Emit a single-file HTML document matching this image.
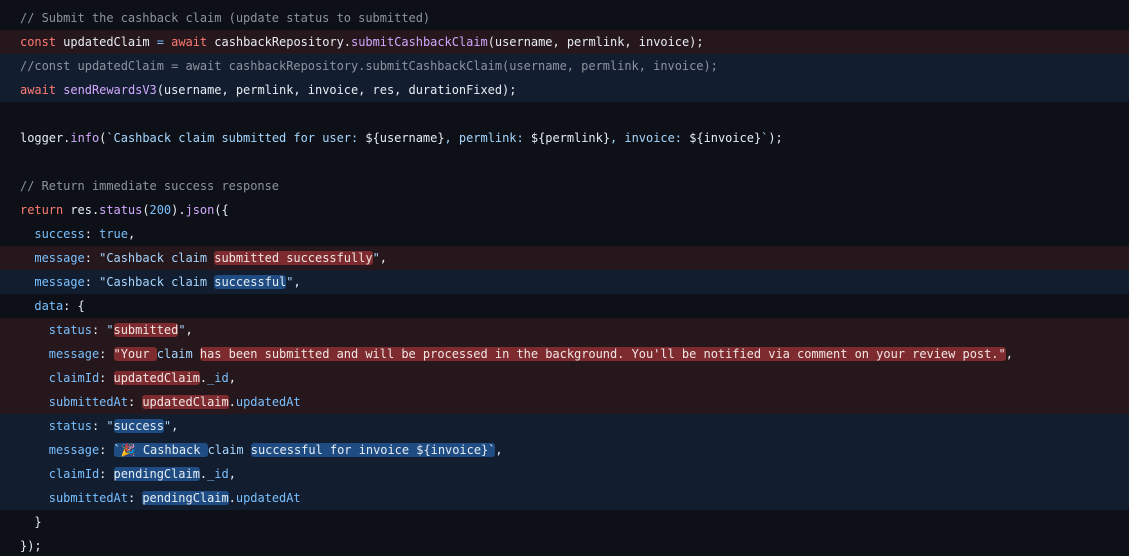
<!DOCTYPE html>
<html><head><style>
html,body{margin:0;padding:0;background:#0d1117;width:1129px;height:556px;overflow:hidden}
.c{padding-top:6px;font-family:"DejaVu Sans Mono",monospace;font-size:12px;letter-spacing:-0.03px;color:#e6edf3}
.l{height:24px;line-height:24px;white-space:pre;padding-left:20px}
.d{background:#25171c}.a{background:#121d2f}
.cm{color:#8b949e}.k{color:#ff7b72}.f{color:#d2a8ff}.p{color:#79c0ff}.s{color:#a5d6ff}
.hd{background:#7d2b2e;color:#f0e6e6;border-radius:3px}
.ha{background:#1f4c82;color:#e6edf3;border-radius:3px}
</style></head><body><div class="c">
<div class="l"><span class="cm">// Submit the cashback claim (update status to submitted)</span></div>
<div class="l d"><span class="k">const</span> updatedClaim <span class="p">=</span> <span class="k">await</span> cashbackRepository.<span class="f">submitCashbackClaim</span>(username, permlink, invoice);</div>
<div class="l a"><span class="cm">//const updatedClaim = await cashbackRepository.submitCashbackClaim(username, permlink, invoice);</span></div>
<div class="l a"><span class="k">await</span> <span class="f">sendRewardsV3</span>(username, permlink, invoice, res, durationFixed);</div>
<div class="l"> </div>
<div class="l">logger.<span class="f">info</span>(<span class="s">`Cashback claim submitted for user: </span>${username}<span class="s">, permlink: </span>${permlink}<span class="s">, invoice: </span>${invoice}<span class="s">`</span>);</div>
<div class="l"> </div>
<div class="l"><span class="cm">// Return immediate success response</span></div>
<div class="l"><span class="k">return</span> res.<span class="f">status</span>(<span class="p">200</span>).<span class="f">json</span>({</div>
<div class="l">  <span class="p">success</span>: <span class="p">true</span>,</div>
<div class="l d">  <span class="p">message</span>: <span class="s">"Cashback claim <span class="hd">submitted successfully</span>"</span>,</div>
<div class="l a">  <span class="p">message</span>: <span class="s">"Cashback claim <span class="ha">successful</span>"</span>,</div>
<div class="l">  <span class="p">data</span>: {</div>
<div class="l d">    <span class="p">status</span>: <span class="s">"<span class="hd">submitted</span>"</span>,</div>
<div class="l d">    <span class="p">message</span>: <span class="s"><span class="hd">"Your </span>claim <span class="hd">has been submitted and will be processed in the background. You'll be notified via comment on your review post."</span></span>,</div>
<div class="l d">    <span class="p">claimId</span>: <span class="hd">updatedClaim</span>.<span class="p">_id</span>,</div>
<div class="l d">    <span class="p">submittedAt</span>: <span class="hd">updatedClaim</span>.<span class="p">updatedAt</span></div>
<div class="l a">    <span class="p">status</span>: <span class="s">"<span class="ha">success</span>"</span>,</div>
<div class="l a">    <span class="p">message</span>: <span class="s"><span class="ha">`🎉 Cashback </span>claim <span class="ha">successful for invoice ${invoice}`</span></span>,</div>
<div class="l a">    <span class="p">claimId</span>: <span class="ha">pendingClaim</span>.<span class="p">_id</span>,</div>
<div class="l a">    <span class="p">submittedAt</span>: <span class="ha">pendingClaim</span>.<span class="p">updatedAt</span></div>
<div class="l">  }</div>
<div class="l">});</div>
</div></body></html>
